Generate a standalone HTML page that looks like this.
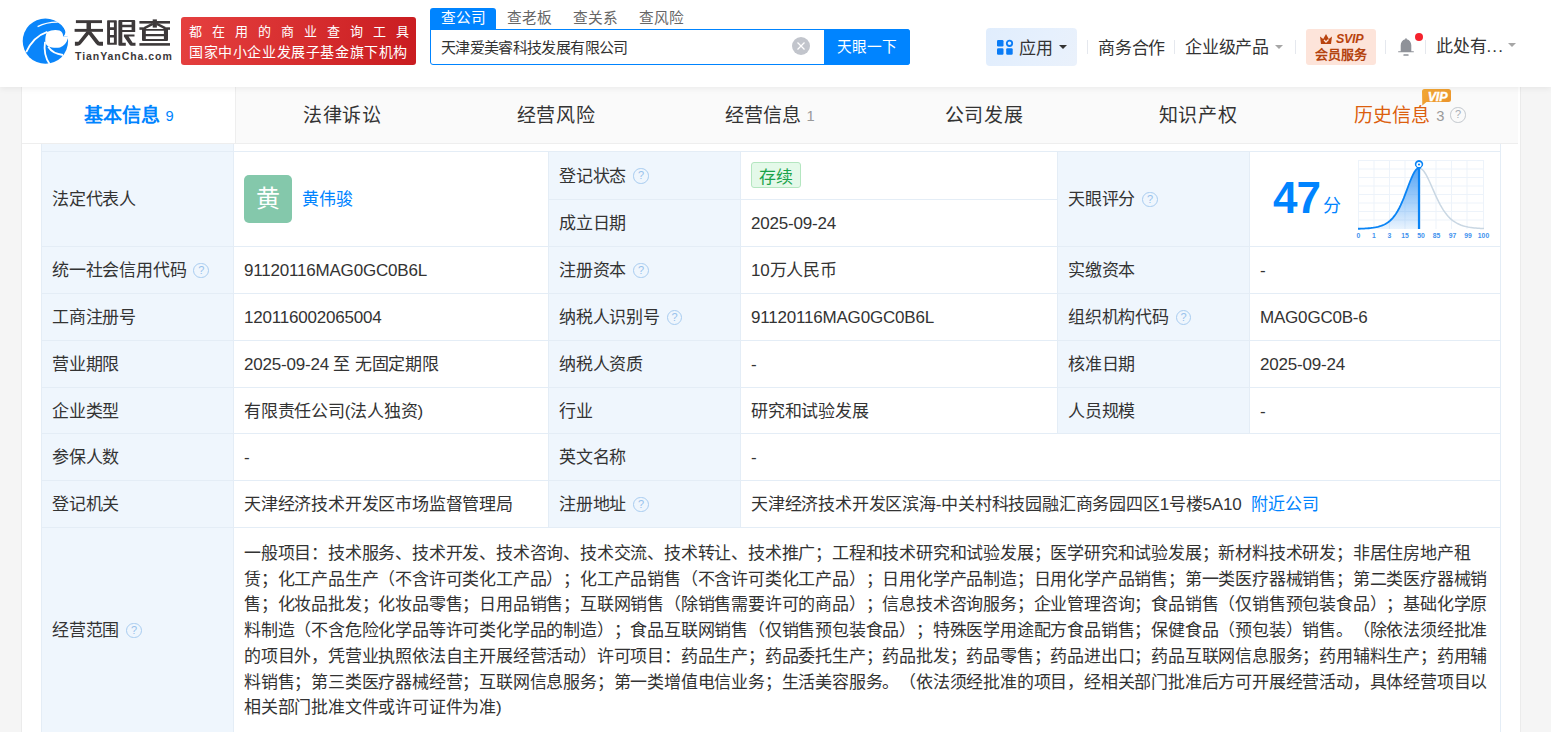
<!DOCTYPE html>
<html lang="zh-CN"><head><meta charset="utf-8">
<style>
*{box-sizing:border-box;margin:0;padding:0}
html,body{text-spacing-trim:space-all;width:1551px;height:732px;overflow:hidden;background:#f5f5f5;font-family:"Liberation Sans",sans-serif;color:#333}
.abs{position:absolute}
#hdr{position:absolute;left:0;top:0;width:1551px;height:87px;background:#fff;z-index:5;box-shadow:0 2px 6px rgba(0,0,0,.06)}
#main{position:absolute;left:21px;top:87px;width:1500px;height:645px;background:#fff;border-left:1px solid #ebebeb;border-right:1px solid #ebebeb}
#tabs{position:absolute;left:22px;top:87px;width:1496px;height:57px;background:#fafafa;border-bottom:1px solid #eeeeee;z-index:3}
.tab{position:absolute;top:0;height:56px;width:214px;text-align:center;font-size:19px;letter-spacing:0.6px;line-height:58px;color:#333}
.tab.on{background:#fff;color:#0084ff;font-weight:bold;letter-spacing:0}
.tab sup{font-size:14.7px;font-weight:normal;vertical-align:1px;margin-left:5px;color:#999;font-family:"Liberation Sans",sans-serif}
table{position:absolute;border-collapse:collapse;table-layout:fixed;font-size:17px;letter-spacing:-0.2px;color:#333}
td{border:1px solid #e4edf6;padding:2px 10px 0;line-height:24px;vertical-align:middle;white-space:nowrap;overflow:hidden}
td.l{background:#eff6fd}
.q{display:inline-block;width:15.5px;height:15.5px;border:1.2px solid #a8ccf0;border-radius:50%;color:#98c2ec;font-size:11px;line-height:13px;text-align:center;vertical-align:middle;margin-left:7px;position:relative;top:-1px}
.link{color:#0084ff}
</style></head>
<body>
<div id="hdr">
  <!-- logo -->
  <svg class="abs" style="left:20px;top:15px" width="52" height="52" viewBox="0 0 52 52">
    <circle cx="25.4" cy="26.1" r="22.7" fill="#0a85fa"/>
    <path d="M37.6,6.9 C41,8.5 44.5,12 45.3,16.3 C45.6,18.5 44.8,20.3 43,21.6 L49.5,21.6 L49.5,6.9 Z" fill="#fff"/>
    <path d="M27,17 C31,15 36,14.3 39.5,15.6 C42,16.8 43.4,19.2 43,21.4 L49.5,21.4 L49.5,23.6 L47.8,23.6 C46.8,28 44,31.2 40,32.4 C36,33.4 31.5,32.6 28.4,31.4 C26.6,30.3 25.6,29 25.3,27.2 C25.1,23.5 25.6,19.8 27,17 Z" fill="#fff"/>
    <path d="M6.2,37.2 C10,28.5 17,20.3 27.3,16.8" stroke="#fff" stroke-width="1.8" fill="none"/>
    <path d="M25,26.8 C23.8,35 25.5,43 29.6,49" stroke="#fff" stroke-width="1.8" fill="none"/>
    <path d="M28.2,31.8 C30.5,35.5 36,39.2 43,40" stroke="#fff" stroke-width="1.8" fill="none"/>
    <path d="M17.6,11.6 C24,8.3 31,7 37.8,7.1" stroke="#fff" stroke-width="1.3" fill="none"/>
  </svg>
  <svg class="abs" style="left:72px;top:16px" width="100" height="32" viewBox="0 0 100 32">
    <g fill="#3d393a" fill-rule="evenodd">
      <rect x="3.9" y="4.2" width="26.1" height="2.9"/>
      <rect x="2.6" y="12.9" width="28.4" height="2.9"/>
      <rect x="14.5" y="6.8" width="4.5" height="6.4"/>
      <path d="M14.5,15.6 L19.2,15.6 L9.6,27.3 Q8.2,29.7 5.8,29.7 L2.9,29.7 L2.9,25.8 L6.4,25.8 Z"/>
      <path d="M14.5,15.6 L19.2,15.6 L27.2,25.8 L31,25.8 L31,29.7 L27.6,29.7 Q25.3,29.7 23.7,27.4 Z"/>
      <path d="M35.1,4.9 Q35.1,4.2 35.8,4.2 L44.1,4.2 Q44.8,4.2 44.8,4.9 L44.8,28.7 L35.8,28.7 Q35.1,28.7 35.1,28 Z M38,6.4 L41.9,6.4 L41.9,11.3 L38,11.3 Z M38,13.9 L41.9,13.9 L41.9,19 L38,19 Z M38,21.6 L41.9,21.6 L41.9,26.8 L38,26.8 Z"/>
      <path d="M46.4,4.9 Q46.4,3.9 47.4,3.9 L62.2,3.9 Q63.2,3.9 63.2,4.9 L63.2,16.1 L50.3,16.1 L50.3,26.8 L53.8,26.8 L53.8,29.7 L47.4,29.7 Q46.4,29.7 46.4,28.7 Z M50.3,6.1 L59.6,6.1 L59.6,8.7 L50.3,8.7 Z M50.3,11.3 L59.6,11.3 L59.6,13.9 L50.3,13.9 Z"/>
      <path d="M51.9,18.4 L62.5,18.4 L62.5,20.6 L56.6,20.6 L60.6,26.8 L63.5,26.8 L63.5,29.7 L59.5,29.7 Q58.2,29.7 57.4,28.5 L51.9,20.6 Z"/>
      <rect x="67.4" y="5" width="30.6" height="2.6"/>
      <rect x="80.7" y="3.4" width="4.2" height="8.2"/>
      <rect x="67.4" y="11.3" width="6.4" height="2.5"/>
      <rect x="91.6" y="11.3" width="6.4" height="2.5"/>
      <path d="M80.8,7.9 L72.4,12.1 M84.8,7.9 L93.2,12.1" stroke="#3d393a" stroke-width="2.3" fill="none"/>
      <path d="M70,12.9 L96,12.9 L96,24.1 Q96,25.1 95,25.1 L71,25.1 Q70,25.1 70,24.1 Z M73.8,14.8 L91.9,14.8 L91.9,18.1 L73.8,18.1 Z M73.8,20.3 L91.9,20.3 L91.9,22.9 L73.8,22.9 Z"/>
      <rect x="67.4" y="27.1" width="30.6" height="2.6"/>
    </g>
  </svg>
  <div class="abs" style="left:75px;top:50px;font-size:10.5px;font-weight:bold;color:#3b3839;letter-spacing:0.95px;line-height:12px">TianYanCha.com</div>
  <div class="abs" style="left:181px;top:17px;width:235px;height:48px;border-radius:3px;background:linear-gradient(100deg,#e5403f,#c91c20)"></div>
  <div class="abs" style="left:189px;top:22px;font-size:13px;color:#fff;letter-spacing:9.95px;line-height:20px">都在用的商业查询工具</div>
  <div class="abs" style="left:189px;top:41.5px;font-size:14px;color:#fff;letter-spacing:0.6px;line-height:20px">国家中小企业发展子基金旗下机构</div>
  <!-- search -->
  <div class="abs" style="left:430px;top:8px;width:66px;height:22px;background:#0084ff;border-radius:3px 3px 0 0"></div>
  <div class="abs" style="left:430px;top:8px;width:66px;text-align:center;font-size:14.7px;line-height:21px;color:#fff">查公司</div>
  <div class="abs" style="left:496px;top:8px;width:66px;text-align:center;font-size:14.7px;line-height:21px;color:#666">查老板</div>
  <div class="abs" style="left:562px;top:8px;width:66px;text-align:center;font-size:14.7px;line-height:21px;color:#666">查关系</div>
  <div class="abs" style="left:628px;top:8px;width:66px;text-align:center;font-size:14.7px;line-height:21px;color:#666">查风险</div>
  <div class="abs" style="left:430px;top:29px;width:480px;height:36px;border:1px solid #0084ff;border-radius:0 3px 3px 3px"></div>
  <div class="abs" style="left:441px;top:30px;font-size:15px;letter-spacing:-0.65px;line-height:36px;color:#333">天津爱美睿科技发展有限公司</div>
  <svg class="abs" style="left:792px;top:37px" width="18" height="18" viewBox="0 0 18 18"><circle cx="9" cy="9" r="9" fill="#c2c5cc"/><path d="M5.5,5.5 L12.5,12.5 M12.5,5.5 L5.5,12.5" stroke="#fff" stroke-width="1.3"/></svg>
  <div class="abs" style="left:824px;top:29px;width:86px;height:36px;background:#0084ff;border-radius:0 3px 3px 0;color:#fff;font-size:14.7px;line-height:36px;text-align:center">天眼一下</div>
  <!-- right nav -->
  <div class="abs" style="left:986px;top:28px;width:91px;height:38px;border-radius:4px;background:linear-gradient(120deg,#e0edfd 0%,#e6f0fd 60%,#eaf1fb 100%)"></div>
  <svg class="abs" style="left:996px;top:39px" width="18" height="17" viewBox="0 0 18 17">
    <rect x="1" y="1" width="6.5" height="6.5" rx="1.2" fill="#0a7cf6"/>
    <circle cx="13.5" cy="4.3" r="2.7" fill="none" stroke="#0a7cf6" stroke-width="1.8"/>
    <rect x="1" y="9.3" width="6.5" height="6.5" rx="1.2" fill="#0a7cf6"/>
    <rect x="10.2" y="9.3" width="6.5" height="6.5" rx="1.2" fill="#0a7cf6"/>
  </svg>
  <div class="abs" style="left:1019px;top:30px;font-size:17px;letter-spacing:-0.2px;line-height:38px">应用</div>
  <div class="abs" style="left:1059px;top:45px;width:0;height:0;border-left:4px solid transparent;border-right:4px solid transparent;border-top:4.5px solid #333"></div>
  <div class="abs" style="left:1087px;top:40px;width:1px;height:14px;background:#e5e8ee"></div>
  <div class="abs" style="left:1098px;top:29.5px;font-size:17px;letter-spacing:-0.2px;line-height:38px">商务合作</div>
  <div class="abs" style="left:1174px;top:40px;width:1px;height:14px;background:#e5e8ee"></div>
  <div class="abs" style="left:1185px;top:29px;font-size:17px;letter-spacing:-0.2px;line-height:38px">企业级产品</div>
  <div class="abs" style="left:1275px;top:45px;width:0;height:0;border-left:4px solid transparent;border-right:4px solid transparent;border-top:4.5px solid #a6a6a6"></div>
  <div class="abs" style="left:1295px;top:40px;width:1px;height:14px;background:#e5e8ee"></div>
  <div class="abs" style="left:1306px;top:29px;width:70px;height:36px;border-radius:3px;background:#fde4da"></div>
  <svg class="abs" style="left:1319px;top:33px" width="15" height="12" viewBox="0 0 15 12">
    <path d="M1,3.5 L4.2,6 L7,1 L9.8,6 L13,3.5 L12,11 L2,11 Z" fill="#b9420e"/>
    <path d="M5,7 L7,9 L9.5,6.5" stroke="#fde4da" stroke-width="1.3" fill="none"/>
  </svg>
  <div class="abs" style="left:1336px;top:31px;font-size:12.5px;font-weight:bold;font-style:italic;color:#b9420e;line-height:16px;letter-spacing:-0.3px">SVIP</div>
  <div class="abs" style="left:1315px;top:46px;font-size:13px;font-weight:bold;color:#b4430f;line-height:18px">会员服务</div>
  <div class="abs" style="left:1385px;top:40px;width:1px;height:14px;background:#e5e8ee"></div>
  <svg class="abs" style="left:1397px;top:37px" width="18" height="21" viewBox="0 0 18 21">
    <path d="M9,1.2 C9.6,1.2 9.8,1.8 9.8,2.3 C12.6,3 14.3,5.3 14.3,8.3 L14.3,14.2 L16.8,14.2 L16.8,15.3 L1.2,15.3 L1.2,14.2 L3.7,14.2 L3.7,8.3 C3.7,5.3 5.4,3 8.2,2.3 C8.2,1.8 8.4,1.2 9,1.2 Z" fill="#8f9299"/>
    <rect x="6.4" y="17.2" width="5.2" height="1.5" rx="0.5" fill="#8f9299"/>
  </svg>
  <div class="abs" style="left:1415px;top:33px;width:8px;height:8px;border-radius:50%;background:#f5222d"></div>
  <div class="abs" style="left:1425px;top:40px;width:1px;height:14px;background:#e5e8ee"></div>
  <div class="abs" style="left:1436px;top:28px;font-size:17px;letter-spacing:-0.2px;line-height:38px">此处有<span style="letter-spacing:1.2px">...</span></div>
  <div class="abs" style="left:1508px;top:43px;width:0;height:0;border-left:4px solid transparent;border-right:4px solid transparent;border-top:4.5px solid #a6a6a6"></div>
</div>
<div id="main"></div>
<div id="tabs">
  <div class="tab on" style="left:0">基本信息<sup style="color:#0084ff">9</sup></div>
  <div class="tab" style="left:213px;border-left:1px solid #eee">法律诉讼</div>
  <div class="tab" style="left:427px">经营风险</div>
  <div class="tab" style="left:641px;letter-spacing:0">经营信息<sup>1</sup></div>
  <div class="tab" style="left:855px">公司发展</div>
  <div class="tab" style="left:1069px">知识产权</div>
  <div class="tab" style="left:1283px;color:#dc5f0e;letter-spacing:0;padding-right:4px">历史信息<sup style="margin-left:6px">3</sup><span style="display:inline-block;width:15.5px;height:15.5px;border:1.3px solid #c3c8ce;border-radius:50%;font-size:11px;line-height:13px;color:#a9aeb5;vertical-align:middle;position:relative;top:-2px;margin-left:6px;letter-spacing:0">?</span></div>
  <svg class="abs" style="left:1400px;top:2px" width="31" height="18" viewBox="0 0 31 18">
    <defs><linearGradient id="vg" x1="0" x2="1" y1="0" y2="1"><stop offset="0" stop-color="#f4a936"/><stop offset="1" stop-color="#e9912b"/></linearGradient></defs>
    <path d="M2.5,0 L26.5,0 Q29,0 29,2.5 L29,10.6 Q29,13.1 26.5,13.1 L4.5,13.1 L0.3,16.5 L0,2.5 Q0,0 2.5,0 Z" fill="url(#vg)"/>
    <text x="15.5" y="11.5" text-anchor="middle" font-family="Liberation Sans" font-weight="bold" font-style="italic" font-size="12.5" fill="#fff" stroke="#fff" stroke-width="0.4" letter-spacing="-0.2">VIP</text>
  </svg>
</div>
<table style="left:41px;top:103px;width:1459px">
  <colgroup><col style="width:192px"><col style="width:315px"><col style="width:192px"><col style="width:317px"><col style="width:192px"><col style="width:251px"></colgroup>
  <tr style="height:48px"><td class="l"></td><td colspan="5"></td></tr>
  <tr style="height:48px"><td class="l" rowspan="2">法定代表人</td><td rowspan="2"></td><td class="l">登记状态<span class="q">?</span></td><td></td><td class="l" rowspan="2">天眼评分<span class="q">?</span></td><td rowspan="2"></td></tr>
  <tr style="height:47px"><td class="l">成立日期</td><td>2025-09-24</td></tr>
  <tr style="height:47px"><td class="l">统一社会信用代码<span class="q">?</span></td><td>91120116MAG0GC0B6L</td><td class="l">注册资本<span class="q">?</span></td><td>10万人民币</td><td class="l">实缴资本</td><td>-</td></tr>
  <tr style="height:47px"><td class="l">工商注册号</td><td>120116002065004</td><td class="l">纳税人识别号<span class="q">?</span></td><td>91120116MAG0GC0B6L</td><td class="l">组织机构代码<span class="q">?</span></td><td>MAG0GC0B-6</td></tr>
  <tr style="height:47px"><td class="l">营业期限</td><td>2025-09-24 至 无固定期限</td><td class="l">纳税人资质</td><td>-</td><td class="l">核准日期</td><td>2025-09-24</td></tr>
  <tr style="height:46px"><td class="l">企业类型</td><td>有限责任公司(法人独资)</td><td class="l">行业</td><td>研究和试验发展</td><td class="l">人员规模</td><td>-</td></tr>
  <tr style="height:47px"><td class="l">参保人数</td><td>-</td><td class="l">英文名称</td><td colspan="3">-</td></tr>
  <tr style="height:47px"><td class="l">登记机关</td><td>天津经济技术开发区市场监督管理局</td><td class="l">注册地址<span class="q">?</span></td><td colspan="3">天津经济技术开发区滨海-中关村科技园融汇商务园四区1号楼5A10<span class="link" style="margin-left:10px">附近公司</span></td></tr>
  <tr style="height:240px"><td class="l" style="vertical-align:top;padding-top:91px">经营范围<span class="q">?</span></td><td colspan="5" style="white-space:normal;line-height:25.7px;vertical-align:top;padding-top:13px">一般项目：技术服务、技术开发、技术咨询、技术交流、技术转让、技术推广；工程和技术研究和试验发展；医学研究和试验发展；新材料技术研发；非居住房地产租赁；化工产品生产（不含许可类化工产品）；化工产品销售（不含许可类化工产品）；日用化学产品制造；日用化学产品销售；第一类医疗器械销售；第二类医疗器械销售；化妆品批发；化妆品零售；日用品销售；互联网销售（除销售需要许可的商品）；信息技术咨询服务；企业管理咨询；食品销售（仅销售预包装食品）；基础化学原料制造（不含危险化学品等许可类化学品的制造）；食品互联网销售（仅销售预包装食品）；特殊医学用途配方食品销售；保健食品（预包装）销售。（除依法须经批准的项目外，凭营业执照依法自主开展经营活动）许可项目：药品生产；药品委托生产；药品批发；药品零售；药品进出口；药品互联网信息服务；药用辅料生产；药用辅料销售；第三类医疗器械经营；互联网信息服务；第一类增值电信业务；生活美容服务。（依法须经批准的项目，经相关部门批准后方可开展经营活动，具体经营项目以相关部门批准文件或许可证件为准)</td></tr>
</table>

<div class="abs" style="left:244px;top:175px;width:48px;height:48px;border-radius:5px;background:#84c8ab;color:#fff;font-size:24px;line-height:48px;text-align:center">黄</div>
<div class="abs link" style="left:302px;top:187.5px;font-size:17px;letter-spacing:-0.2px;line-height:24px">黄伟骏</div>
<div class="abs" style="left:751px;top:162px;width:50px;height:26px;border-radius:3px;background:#e4f9e9;border:1px solid #b4e6c0;color:#1aa34a;font-size:17px;letter-spacing:-0.2px;line-height:30px;text-align:center">存续</div>
<div class="abs" style="left:1273px;top:173px;font-size:44px;font-weight:bold;color:#0084ff;line-height:50px;letter-spacing:-1px">47</div>
<div class="abs" style="left:1323px;top:194px;font-size:18px;color:#0084ff;line-height:24px">分</div>
<svg class="abs" style="left:1350px;top:155px" width="145" height="88" viewBox="0 0 145 88">
  <defs>
    <linearGradient id="fillg" x1="0" y1="0" x2="0" y2="1"><stop offset="0" stop-color="#4a9ff5" stop-opacity="0.95"/><stop offset="1" stop-color="#4a9ff5" stop-opacity="0.12"/></linearGradient>
  </defs>
  <g stroke="#edf3fa" stroke-width="1" fill="none">
    <path d="M8,5.5 H134 M8,14 H134 M8,22.5 H134 M8,31 H134 M8,39.5 H134 M8,48 H134 M8,56.5 H134 M8,65 H134"/>
    <path d="M8.5,5 V74 M24,5 V74 M39.5,5 V74 M55,5 V74 M70.5,5 V74 M86,5 V74 M101.5,5 V74 M117,5 V74 M133.5,5 V74"/>
  </g>
  <path d="M69.0,13.0 L70.62,13.38 L72.25,14.51 L73.88,16.32 L75.5,18.74 L77.12,21.66 L78.75,24.96 L80.38,28.51 L82.0,32.19 L83.62,35.91 L85.25,39.57 L86.88,43.09 L88.5,46.43 L90.12,49.55 L91.75,52.43 L93.38,55.05 L95.0,57.42 L96.62,59.54 L98.25,61.43 L99.88,63.1 L101.5,64.57 L103.12,65.85 L104.75,66.98 L106.38,67.95 L108.0,68.8 L109.62,69.54 L111.25,70.17 L112.88,70.72 L114.5,71.19 L116.12,71.59 L117.75,71.94 L119.38,72.24 L121.0,72.49 L122.62,72.71 L124.25,72.9 L125.88,73.06 L127.5,73.19 L129.12,73.31 L130.75,73.41 L132.38,73.5 L134.0,73.57" stroke="#c9d7e3" stroke-width="1.5" fill="none"/>
  <path d="M8.0,73.77 L9.53,73.73 L11.05,73.68 L12.57,73.62 L14.1,73.54 L15.62,73.46 L17.15,73.35 L18.67,73.23 L20.2,73.08 L21.73,72.91 L23.25,72.71 L24.77,72.46 L26.3,72.17 L27.82,71.83 L29.35,71.43 L30.88,70.95 L32.4,70.39 L33.92,69.73 L35.45,68.95 L36.97,68.03 L38.5,66.96 L40.02,65.72 L41.55,64.27 L43.07,62.6 L44.6,60.68 L46.12,58.49 L47.65,56.01 L49.17,53.22 L50.7,50.13 L52.22,46.73 L53.75,43.07 L55.27,39.18 L56.8,35.15 L58.32,31.06 L59.85,27.05 L61.38,23.26 L62.9,19.85 L64.42,16.99 L65.95,14.82 L67.47,13.46 L69.0,13.0 L69,74 L8,74 Z" fill="url(#fillg)"/>
  <path d="M8.0,73.77 L9.53,73.73 L11.05,73.68 L12.57,73.62 L14.1,73.54 L15.62,73.46 L17.15,73.35 L18.67,73.23 L20.2,73.08 L21.73,72.91 L23.25,72.71 L24.77,72.46 L26.3,72.17 L27.82,71.83 L29.35,71.43 L30.88,70.95 L32.4,70.39 L33.92,69.73 L35.45,68.95 L36.97,68.03 L38.5,66.96 L40.02,65.72 L41.55,64.27 L43.07,62.6 L44.6,60.68 L46.12,58.49 L47.65,56.01 L49.17,53.22 L50.7,50.13 L52.22,46.73 L53.75,43.07 L55.27,39.18 L56.8,35.15 L58.32,31.06 L59.85,27.05 L61.38,23.26 L62.9,19.85 L64.42,16.99 L65.95,14.82 L67.47,13.46 L69.0,13.0" stroke="#0a84f5" stroke-width="1.8" fill="none"/>
  <path d="M69,12 V74" stroke="#0a84f5" stroke-width="2.2"/>
  <path d="M65,10.5 A4.2,4.2 0 1 1 73,10.5 L69,15.5 Z" fill="#0a84f5"/>
  <circle cx="69" cy="9.5" r="2.6" fill="#fff"/>
  <circle cx="69" cy="9.5" r="1.1" fill="#0a84f5"/>
  <g font-family="Liberation Sans" font-size="6.8" font-weight="bold" fill="#3f92ee" text-anchor="middle">
    <text x="8.5" y="83">0</text><text x="24" y="83">1</text><text x="39.5" y="83">3</text><text x="55" y="83">15</text><text x="71" y="83">50</text><text x="86.5" y="83">85</text><text x="102.5" y="83">97</text><text x="118" y="83">99</text><text x="133.5" y="83">100</text>
  </g>
</svg>
</body></html>
